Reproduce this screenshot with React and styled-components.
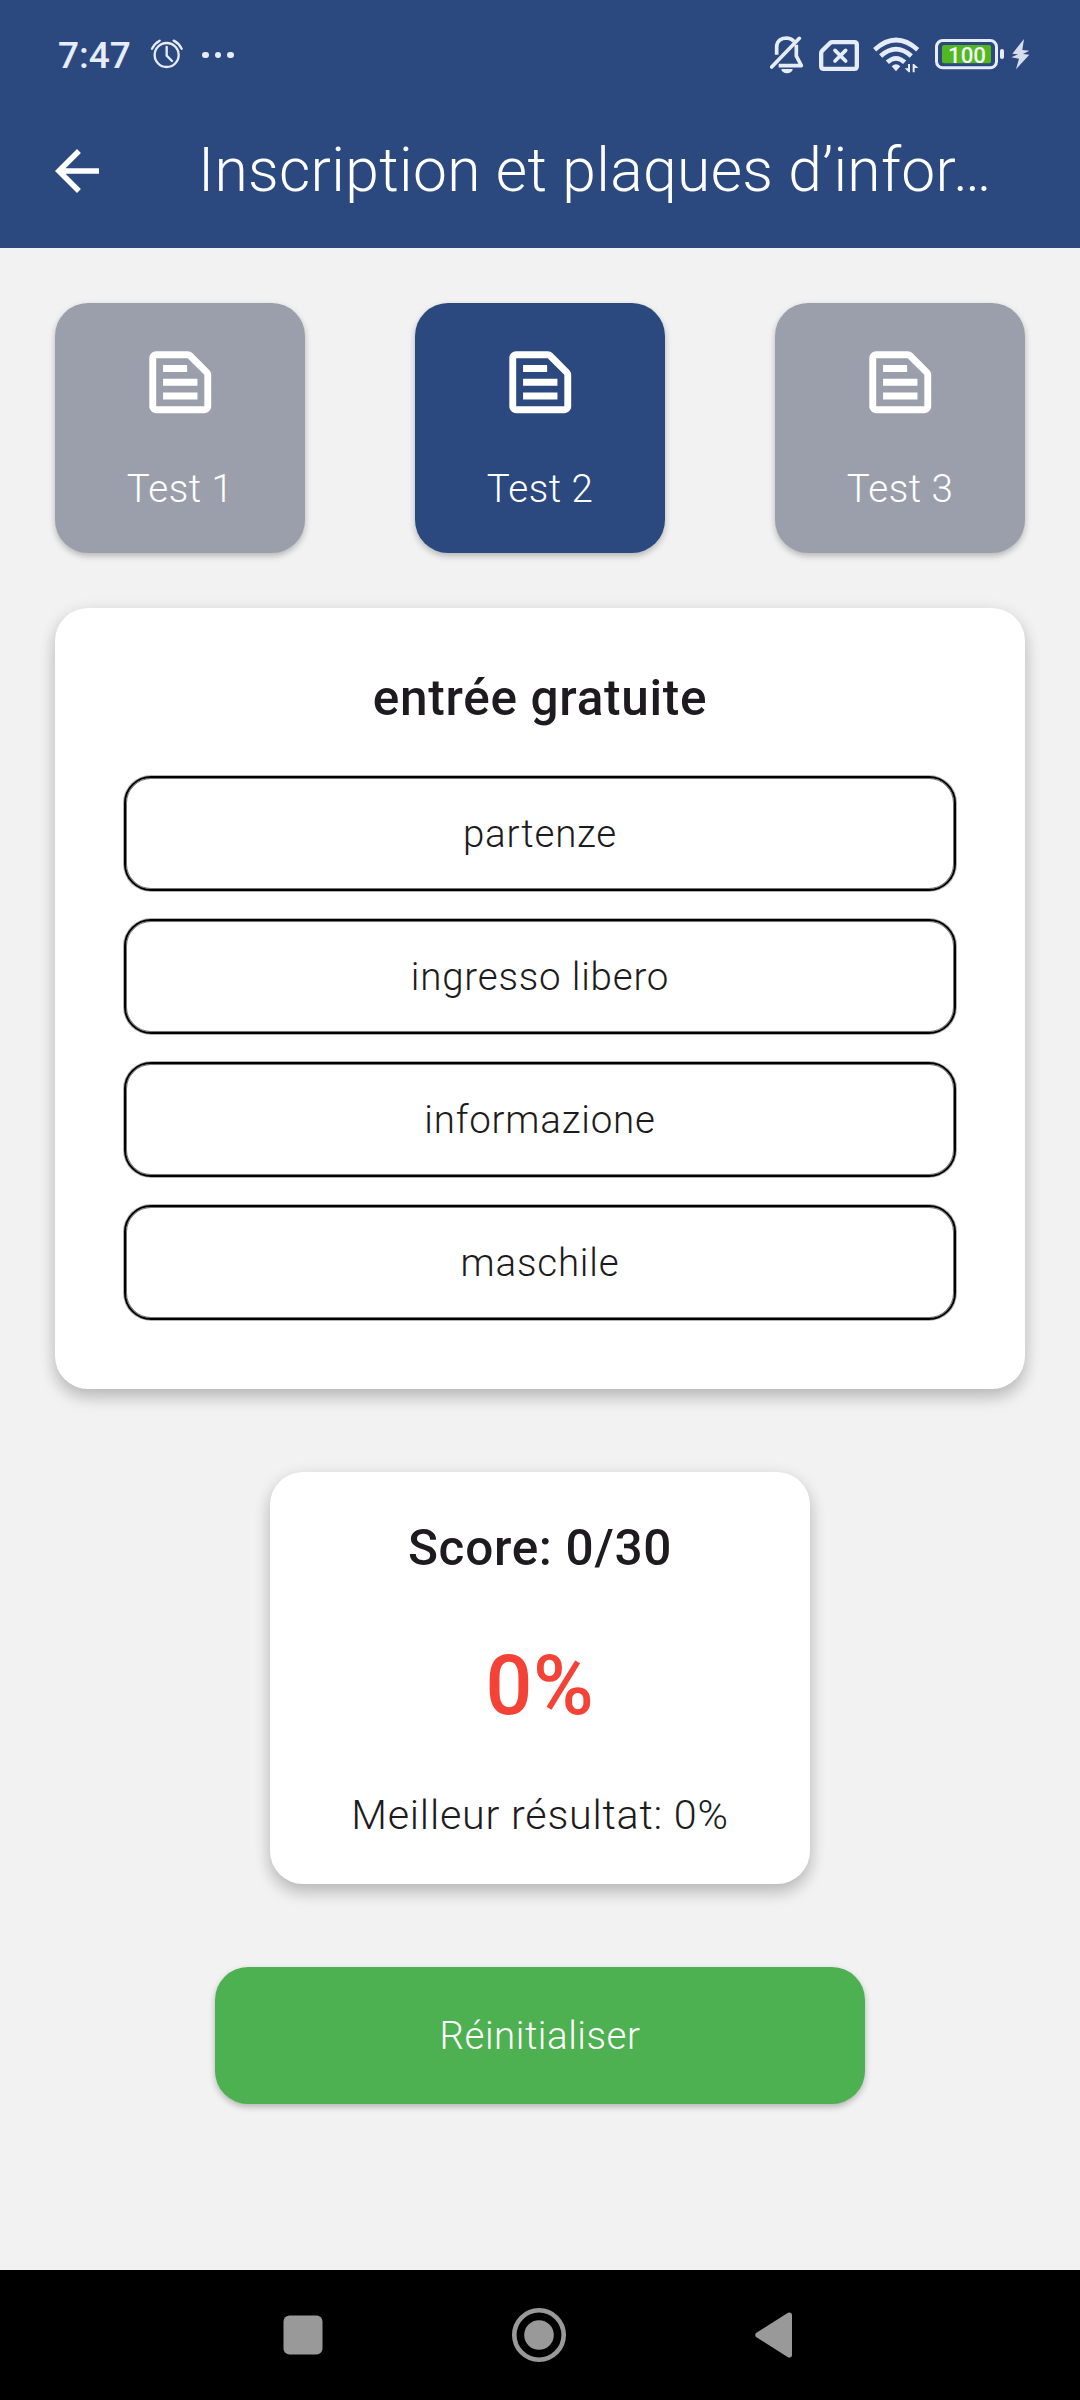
import React, { useState } from 'react';
import styled, { createGlobalStyle } from 'styled-components';
import { MdArrowBack, MdOutlineTextSnippet } from 'react-icons/md';

const tests = ['Test 1', 'Test 2', 'Test 3'];

const question = {
  title: 'entrée gratuite',
  answers: ['partenze', 'ingresso libero', 'informazione', 'maschile'],
};

function StatusBar() {
  return (
    <Status>
      <Clock>7:47</Clock>
      <StatusIcon width="34" viewBox="0 0 102 150">
        <g fill="none" stroke="#e6ecf9" strokeWidth="7" strokeLinecap="round">
          <circle cx="50" cy="75" r="36" />
          <path d="M50 51 V77 L66 93" strokeLinejoin="round" />
          <path d="M6 56 Q14 40 29 32 M71 32 Q87 40 95 56" />
        </g>
      </StatusIcon>
      <Dots>
        <i />
        <i />
        <i />
      </Dots>
      <StatusRight>
        <StatusIcon width="35" viewBox="2 0 105 150">
          <g fill="none" stroke="#e6ecf9" strokeWidth="11">
            <path d="M22 74 V52 C22 31 37 24 53 24 C62 25 69 28 74 34" />
            <path d="M7 111 L90 25" strokeLinecap="round" />
            <path d="M81 44 V78 L96 107 H28" strokeLinejoin="round" />
          </g>
          <path d="M36 117 H70 A17 13 0 0 1 36 117Z" fill="#e6ecf9" />
        </StatusIcon>
        <StatusIcon width="40" viewBox="0 0 120 150">
          <g fill="none" stroke="#e6ecf9">
            <path
              strokeWidth="13"
              d="M40 36.500 H106 Q113.500 36.500 113.500 44 V109 Q113.500 116.500 106 116.500 H14 Q6.500 116.500 6.500 109 V70 Q6.500 66 9 63 L33 39 Q36 36.500 40 36.500Z"
            />
            <path strokeWidth="11" strokeLinecap="round" d="M48 61 L80 93 M80 61 L48 93" />
          </g>
        </StatusIcon>
        <StatusIcon width="48" viewBox="0 0 144 150">
          <g fill="none" stroke="#e6ecf9" strokeWidth="14">
            <path d="M5 59 Q69 1 134 59" />
            <path d="M23 78 Q69 37 115 78" />
            <path d="M43 97 Q69 73 95 97" />
          </g>
          <path d="M56 109 Q69 97 82 109 L69 124Z" fill="#e6ecf9" />
          <path d="M105 102 H111 V127 H107 L95 115 H105Z" fill="#e6ecf9" />
          <path d="M119 127 H125 V114 H136 L123 102 H119Z" fill="#e6ecf9" />
        </StatusIcon>
        <StatusIcon width="69" viewBox="0 0 207 150">
          <rect x="4.5" y="31.5" width="180" height="82" rx="19" fill="none" stroke="#e6ecf9" strokeWidth="9" />
          <rect x="195" y="57" width="12" height="30" rx="6" fill="#e6ecf9" />
          <rect x="21" y="45" width="147" height="55" rx="6" fill="#52b721" />
          <text x="96" y="97.500" textAnchor="middle" fontSize="67" fontWeight="500" fill="#f0f6f4">100</text>
        </StatusIcon>
        <StatusIcon width="19" viewBox="0 0 57 150" $tight>
          <path d="M39 27 L4 71 L21 73 L1 82 L24 86 L15 118 L55 74 L36 72 L55 62 L34 60Z" fill="#d6dded" />
        </StatusIcon>
      </StatusRight>
    </Status>
  );
}

export default function App() {
  const [selected, setSelected] = useState(1);

  return (
    <Page>
      <GlobalStyle />
      <Header>
        <StatusBar />
        <AppBar>
          <MdArrowBack size={66} />
          <h1>Inscription et plaques d’infor…</h1>
        </AppBar>
      </Header>
      <Content>
        <Tests>
          {tests.map((test, index) => (
            <TestButton key={test} $active={index === selected} onClick={() => setSelected(index)}>
              <MdOutlineTextSnippet size={82.5} />
              <span>{test}</span>
            </TestButton>
          ))}
        </Tests>
        <QuestionCard>
          <h2>{question.title}</h2>
          <Answers>
            {question.answers.map((answer) => (
              <Answer key={answer}>{answer}</Answer>
            ))}
          </Answers>
        </QuestionCard>
        <ScoreCard>
          <Score>Score: 0/30</Score>
          <Percent>0%</Percent>
          <Best>Meilleur résultat: 0%</Best>
        </ScoreCard>
        <Reset>Réinitialiser</Reset>
      </Content>
      <NavBar>
        <svg width="40" height="60" viewBox="0 0 40 60">
          <rect x="0.5" y="10.5" width="39" height="39" rx="6" />
        </svg>
        <svg width="56" height="60" viewBox="0 0 56 60">
          <circle cx="28" cy="30" r="24.7" fill="none" stroke="#999" strokeWidth="4.6" />
          <circle cx="28" cy="30" r="14.8" />
        </svg>
        <svg width="37" height="60" viewBox="0 0 37 60">
          <path d="M1 28 L33 7.8 Q37 6.500 37 10 V50 Q37 53.500 33 52.200 L1 32 Q-0.500 30 1 28Z" />
        </svg>
      </NavBar>
    </Page>
  );
}

const GlobalStyle = createGlobalStyle`
  * {
    box-sizing: border-box;
    margin: 0;
    padding: 0;
  }
  body {
    font-family: Roboto, "Liberation Sans", sans-serif;
    background: #f2f2f2;
  }
  button {
    font-family: inherit;
    border: none;
    cursor: pointer;
  }
`;

const Page = styled.div`
  width: 1080px;
  height: 2400px;
  display: flex;
  flex-direction: column;
  background: #f2f2f2;
  color: #1d1b20;
  overflow: hidden;
`;

const Header = styled.header`
  height: 248px;
  background: #2c497f;
  color: #fff;
`;

const Status = styled.div`
  height: 94px;
  padding: 16px 50px 0 58px;
  display: flex;
  align-items: center;
`;

const Clock = styled.span`
  width: 92px;
  font-size: 37px;
  font-weight: 500;
  color: #e6ecf9;
`;

const StatusIcon = styled.svg`
  height: 50px;
  flex: none;
  margin-left: ${({ $tight }) => ($tight ? '-7px' : '0')};
`;

const Dots = styled.div`
  display: flex;
  gap: 6px;
  margin-left: 18px;
  i {
    width: 6.5px;
    height: 6.5px;
    border-radius: 50%;
    background: #e6ecf9;
  }
`;

const StatusRight = styled.div`
  display: flex;
  gap: 14px;
  margin-left: auto;
`;

const AppBar = styled.div`
  height: 154px;
  padding-left: 44px;
  display: flex;
  align-items: center;
  h1 {
    margin-left: 88px;
    font-size: 60.5px;
    font-weight: 300;
    line-height: 76px;
    letter-spacing: 0.34px;
    white-space: nowrap;
  }
`;

const Content = styled.main`
  flex: 1;
  padding: 55px 55px 0;
  display: flex;
  flex-direction: column;
  align-items: center;
`;

const Tests = styled.div`
  width: 100%;
  display: flex;
  justify-content: space-between;
`;

const TestButton = styled.button`
  width: 250px;
  height: 250px;
  padding-top: 37.5px;
  display: flex;
  flex-direction: column;
  align-items: center;
  gap: 38px;
  border-radius: 33px;
  background: ${({ $active }) => ($active ? '#2c497f' : '#9b9fab')};
  color: #fff;
  box-shadow: 0 3px 6px rgba(0, 0, 0, 0.25);
  span {
    font-size: 38.5px;
    font-weight: 300;
    line-height: 55px;
    letter-spacing: 0.5px;
  }
`;

const Card = styled.section`
  display: flex;
  flex-direction: column;
  background: #fff;
  border-radius: 33px;
  text-align: center;
  box-shadow: 0 9px 16px rgba(0, 0, 0, 0.18), 0 3px 18px rgba(0, 0, 0, 0.09);
`;

const QuestionCard = styled(Card)`
  width: 970px;
  height: 781px;
  margin-top: 55px;
  padding: 61px 69px 0;
  h2 {
    font-size: 49.5px;
    font-weight: 500;
    line-height: 58px;
    letter-spacing: 0.69px;
  }
`;

const Answers = styled.div`
  margin-top: 49px;
  display: flex;
  flex-direction: column;
  gap: 28px;
`;

const Answer = styled.button`
  height: 115px;
  border: 2px solid #000;
  border-radius: 27px;
  background: #fff;
  color: #1d1b20;
  font-size: 38.5px;
  font-weight: 300;
  letter-spacing: 0.8px;
  box-shadow: 0 0 0 1px rgba(0, 0, 0, 0.3), inset 0 0 0 1px rgba(0, 0, 0, 0.55);
`;

const ScoreCard = styled(Card)`
  width: 540px;
  height: 412px;
  margin-top: 83px;
  padding-top: 47px;
`;

const Score = styled.p`
  font-size: 49.5px;
  font-weight: 500;
  line-height: 58px;
  letter-spacing: 0.69px;
`;

const Percent = styled.p`
  margin-top: 61px;
  font-size: 82.5px;
  font-weight: 500;
  line-height: 96px;
  letter-spacing: 0.69px;
  color: #f44336;
`;

const Best = styled.p`
  margin-top: 57px;
  font-size: 41.25px;
  font-weight: 300;
  line-height: 48px;
  letter-spacing: 0.78px;
`;

const Reset = styled.button`
  width: 650px;
  height: 137px;
  margin-top: 83px;
  border-radius: 33px;
  background: #4db051;
  color: #fff;
  font-size: 38.5px;
  font-weight: 300;
  letter-spacing: 0.52px;
  box-shadow: 0 3px 6px rgba(0, 0, 0, 0.25);
`;

const NavBar = styled.nav`
  height: 130px;
  padding: 0 288px 0 283px;
  display: flex;
  align-items: center;
  justify-content: space-between;
  background: #000;
  fill: #999;
`;
